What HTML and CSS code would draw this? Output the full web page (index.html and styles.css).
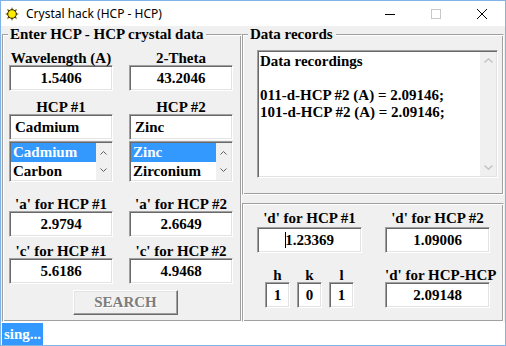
FILE: index.html
```html
<!DOCTYPE html>
<html lang="en">

<head>
    <meta charset="UTF-8">
    <meta name="viewport" content="width=device-width, initial-scale=1.0">
    <title>Crystal hack (HCP - HCP)</title>
    <link rel="stylesheet" href="styles.css">
</head>

<body>
    <div class="window">
        <!-- title bar -->
        <div class="titlebar">
            <svg class="app-icon" viewBox="0 0 14 14" width="14" height="14">
                <polygon points="7,0 8.3,3.6 12,2 10.4,5.7 14,7 10.4,8.3 12,12 8.3,10.4 7,14 5.7,10.4 2,12 3.6,8.3 0,7 3.6,5.7 2,2 5.7,3.6" fill="#6b5a00" />
                <circle cx="7" cy="7" r="4.3" fill="#ffea00" stroke="#2b2400" stroke-width="1" />
            </svg>
            <span class="caption">Crystal hack (HCP - HCP)</span>
            <div class="controls">
                <span class="ctl"><svg width="10" height="10" viewBox="0 0 10 10"><line x1="0" y1="5.5" x2="10" y2="5.5" stroke="#000" /></svg></span>
                <span class="ctl"><svg width="10" height="10" viewBox="0 0 10 10"><rect x="0.5" y="0.5" width="9" height="9" fill="none" stroke="#c8c8c8" /></svg></span>
                <span class="ctl"><svg width="10" height="10" viewBox="0 0 10 10"><path d="M0 0L10 10M10 0L0 10" stroke="#000" stroke-width="1" /></svg></span>
            </div>
        </div>

        <div class="client">
            <!-- left: input data -->
            <fieldset class="group input-group">
                <legend>Enter HCP - HCP crystal data</legend>
                <div class="pair">
                    <div class="cell">
                        <div class="lbl">Wavelength (A)</div>
                        <div class="box">1.5406</div>
                    </div>
                    <div class="cell">
                        <div class="lbl">2-Theta</div>
                        <div class="box">43.2046</div>
                    </div>
                </div>
                <div class="pair row-hcp">
                    <div class="cell">
                        <div class="lbl">HCP #1</div>
                        <div class="box combo">Cadmium</div>
                        <div class="list">
                            <div class="items">
                                <div class="item selected">Cadmium</div>
                                <div class="item">Carbon</div>
                            </div>
                            <div class="list-scroll">
                                <svg width="7" height="5" viewBox="0 0 7 5"><polyline points="0.5,4.5 3.5,1.5 6.5,4.5" fill="none" stroke="#606060" /></svg>
                                <svg width="7" height="5" viewBox="0 0 7 5"><polyline points="0.5,0.5 3.5,3.5 6.5,0.5" fill="none" stroke="#606060" /></svg>
                            </div>
                        </div>
                    </div>
                    <div class="cell">
                        <div class="lbl">HCP #2</div>
                        <div class="box combo">Zinc</div>
                        <div class="list">
                            <div class="items">
                                <div class="item selected">Zinc</div>
                                <div class="item">Zirconium</div>
                            </div>
                            <div class="list-scroll">
                                <svg width="7" height="5" viewBox="0 0 7 5"><polyline points="0.5,4.5 3.5,1.5 6.5,4.5" fill="none" stroke="#606060" /></svg>
                                <svg width="7" height="5" viewBox="0 0 7 5"><polyline points="0.5,0.5 3.5,3.5 6.5,0.5" fill="none" stroke="#606060" /></svg>
                            </div>
                        </div>
                    </div>
                </div>
                <div class="pair row-a">
                    <div class="cell">
                        <div class="lbl">'a' for HCP #1</div>
                        <div class="box">2.9794</div>
                    </div>
                    <div class="cell">
                        <div class="lbl">'a' for HCP #2</div>
                        <div class="box">2.6649</div>
                    </div>
                </div>
                <div class="pair row-c">
                    <div class="cell">
                        <div class="lbl">'c' for HCP #1</div>
                        <div class="box">5.6186</div>
                    </div>
                    <div class="cell">
                        <div class="lbl">'c' for HCP #2</div>
                        <div class="box">4.9468</div>
                    </div>
                </div>
                <button class="btn" disabled>SEARCH</button>
            </fieldset>

            <div class="right">
                <!-- records -->
                <fieldset class="group records">
                    <legend>Data records</legend>
                    <div class="memo">
                        <div class="memo-text">Data recordings

011-d-HCP #2 (A) = 2.09146;
101-d-HCP #2 (A) = 2.09146;</div>
                        <div class="memo-scroll">
                            <span class="sb-btn"><svg width="9" height="5" viewBox="0 0 9 5"><polyline points="0.5,4.5 4.5,0.8 8.5,4.5" fill="none" stroke="#c2c2c2" stroke-width="1.4" /></svg></span>
                            <span class="sb-btn"><svg width="9" height="5" viewBox="0 0 9 5"><polyline points="0.5,0.5 4.5,4.2 8.5,0.5" fill="none" stroke="#c2c2c2" stroke-width="1.4" /></svg></span>
                        </div>
                    </div>
                </fieldset>

                <!-- results -->
                <div class="panel">
                    <div class="pair-d">
                        <div class="cell">
                            <div class="lbl">'d' for HCP #1</div>
                            <div class="box"><span class="caret"></span>1.23369</div>
                        </div>
                        <div class="cell">
                            <div class="lbl">'d' for HCP #2</div>
                            <div class="box">1.09006</div>
                        </div>
                    </div>
                    <div class="pair-d row-hkl">
                        <div class="hkl">
                            <div class="mini">
                                <div class="lbl">h</div>
                                <div class="box">1</div>
                            </div>
                            <div class="mini">
                                <div class="lbl">k</div>
                                <div class="box">0</div>
                            </div>
                            <div class="mini">
                                <div class="lbl">l</div>
                                <div class="box">1</div>
                            </div>
                        </div>
                        <div class="cell">
                            <div class="lbl">'d' for HCP-HCP</div>
                            <div class="box">2.09148</div>
                        </div>
                    </div>
                </div>
            </div>
        </div>

        <div class="status">
            <span class="status-text">sing...</span>
        </div>
    </div>
</body>

</html>
```

FILE: styles.css
```css
* {
    margin: 0;
    padding: 0;
    box-sizing: border-box;
}

body {
    width: 506px;
    height: 346px;
    overflow: hidden;
    font: bold 15px "Liberation Serif", "Times New Roman", serif;
    color: #000;
}

.window {
    width: 506px;
    height: 346px;
    border: 1px solid #80b4e7;
    display: flex;
    flex-direction: column;
    background: #fff;
}

/* title bar */
.titlebar {
    flex: none;
    height: 25px;
    display: flex;
    align-items: center;
    background: #fff;
}

.app-icon {
    margin-left: 4px;
}

.caption {
    margin-left: 7px;
    font: normal 12px "Noto Sans", sans-serif;
    color: #000;
}

.controls {
    margin-left: auto;
    display: flex;
}

.ctl {
    width: 46px;
    height: 25px;
    display: flex;
    align-items: center;
    justify-content: center;
}

/* client area */
.client {
    flex: none;
    height: 296px;
    display: flex;
    background: #f0f0f0;
}

.group,
.panel {
    border: 1px solid #a0a0a0;
    border-right-color: #fff;
    border-bottom-color: #fff;
    box-shadow: inset 1px 1px #fff, inset -1px -1px #a0a0a0;
}

.group {
    min-width: 0;
    padding: 9px 0 0 5px;
}

.group legend {
    padding: 0 3px 0 2px;
    line-height: 17px;
    background: #f0f0f0;
}

.input-group {
    width: 240px;
    height: 296px;
    margin-left: 1px;
}

.pair {
    display: grid;
    grid-template-columns: 104px 104px;
    column-gap: 16px;
    margin-left: 1px;
}

.row-hcp {
    margin-top: 10px;
}

.row-a {
    margin-top: 16px;
}

.row-c {
    margin-top: 8px;
}

.lbl {
    height: 13px;
    line-height: 13px;
    text-align: center;
    white-space: nowrap;
}

.box {
    height: 26px;
    line-height: 24px;
    background: #fff;
    border: 1px solid;
    border-color: #a0a0a0 #fff #fff #a0a0a0;
    box-shadow: inset 1px 1px #696969, inset -1px -1px #e3e3e3;
    text-align: center;
    white-space: nowrap;
}

.combo {
    text-align: left;
    padding-left: 5px;
}

.list {
    height: 41px;
    margin-top: 1px;
    display: flex;
    background: #fff;
    border: 1px solid;
    border-color: #a0a0a0 #fff #fff #a0a0a0;
    box-shadow: inset 1px 1px #696969, inset -1px -1px #e3e3e3;
    padding: 1px;
    overflow: hidden;
}

.items {
    flex: 1;
}

.item {
    height: 19px;
    line-height: 19px;
    padding-left: 2px;
    white-space: nowrap;
}

.item.selected {
    background: #3399ff;
    color: #fff;
}

.list-scroll {
    width: 15px;
    background: #f0f0f0;
    display: flex;
    flex-direction: column;
    justify-content: space-around;
    align-items: center;
}

.btn {
    display: block;
    width: 105px;
    height: 25px;
    margin: 6px 0 0 65px;
    font: inherit;
    color: #7c7c7c;
    text-shadow: 1px 1px #fff;
    background: #f0f0f0;
    border: 1px solid;
    border-color: #fff #696969 #696969 #fff;
    box-shadow: inset -1px -1px #a0a0a0, inset 1px 1px #e3e3e3;
}

/* right side */
.right {
    width: 262px;
}

.records {
    height: 169px;
    padding-top: 7px;
}

.memo {
    width: 241px;
    height: 128px;
    margin-left: 9px;
    display: flex;
    background: #fff;
    border: 1px solid;
    border-color: #a0a0a0 #fff #fff #a0a0a0;
    box-shadow: inset 1px 1px #696969, inset -1px -1px #e3e3e3;
    padding: 1px;
}

.memo-text {
    flex: 1;
    padding: 1px 0 0 1px;
    line-height: 17px;
    white-space: pre;
}

.memo-scroll {
    width: 16px;
    background: #f0f0f0;
    display: flex;
    flex-direction: column;
    justify-content: space-between;
}

.sb-btn {
    height: 17px;
    display: flex;
    align-items: center;
    justify-content: center;
}

.panel {
    height: 119px;
    margin-top: 8px;
    padding: 8px 0 0 14px;
}

.pair-d {
    display: grid;
    grid-template-columns: 105px 105px;
    column-gap: 23px;
}

.pair-d .cell .box {
    margin-top: 2px;
}

.row-hkl {
    margin-top: 16px;
}

.row-hkl .cell .box {
    margin-top: 0;
}

.hkl {
    display: flex;
    justify-content: center;
    gap: 7px;
}

.mini {
    width: 25px;
}

.caret {
    display: inline-block;
    width: 1px;
    height: 16px;
    margin-right: -1px;
    vertical-align: -3px;
    background: #000;
}

/* status strip */
.status {
    flex: 1;
    background: #fff;
    padding: 1px 0 0 1px;
}

.status-text {
    display: block;
    width: 41px;
    height: 22px;
    line-height: 22px;
    padding-left: 2px;
    background: #3399ff;
    color: #fff;
}
```
